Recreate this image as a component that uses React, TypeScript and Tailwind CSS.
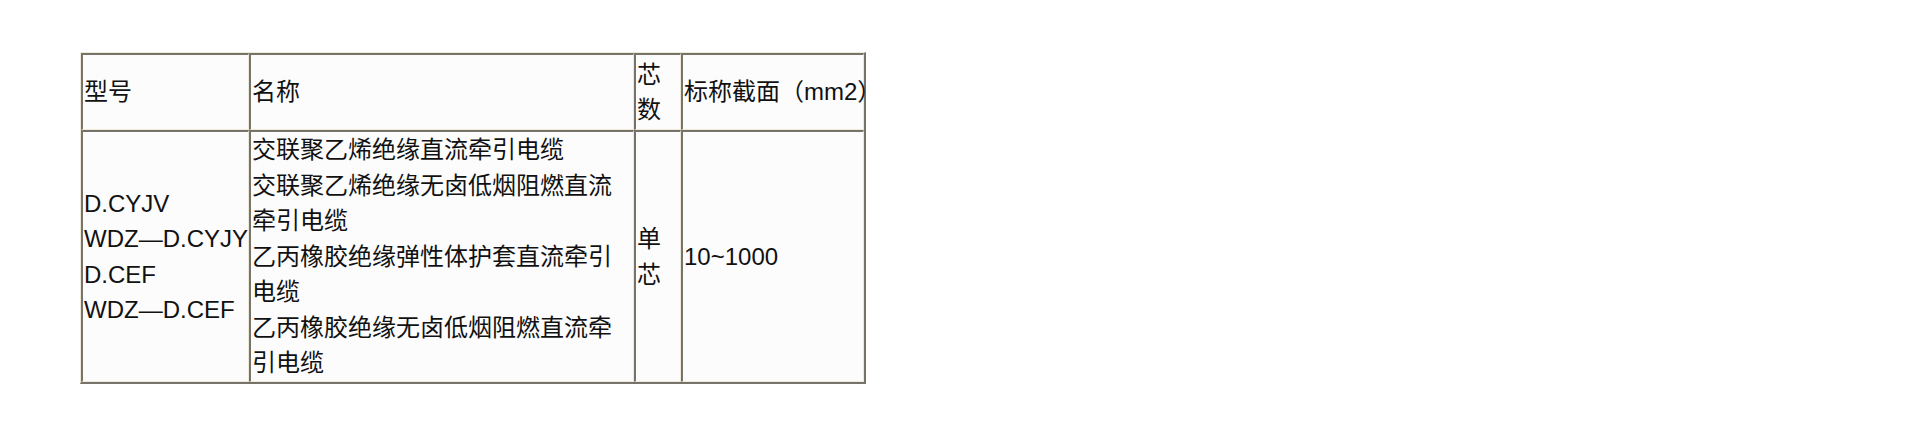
const cell =
  "flex flex-col justify-center pl-px bg-[#fcfcfc] border-t-2 border-l-2 border-r border-b border-t-[#77736a] border-l-[#77736a] border-r-[#ece9d8] border-b-[#ece9d8]";

const models = ["D.CYJV", "WDZ—D.CYJY", "D.CEF", "WDZ—D.CEF"];

const names = [
  "交联聚乙烯绝缘直流牵引电缆",
  "交联聚乙烯绝缘无卤低烟阻燃直流牵引电缆",
  "乙丙橡胶绝缘弹性体护套直流牵引电缆",
  "乙丙橡胶绝缘无卤低烟阻燃直流牵引电缆",
];

export default function App() {
  return (
    <div className="w-[1920px] h-[438px] bg-white pt-[52px] pl-[80px] font-['Liberation_Sans','Noto_Sans_CJK_SC',sans-serif] text-[24px] leading-[35.5px] text-[#111]">
      <div className="grid w-fit grid-cols-[168px_385px_47px_183px] grid-rows-[77px_252px] border-t border-l border-r-2 border-b-2 border-t-[#ece9d8] border-l-[#ece9d8] border-r-[#77736a] border-b-[#77736a]">
        {/* header row */}
        <div className={cell}>型号</div>
        <div className={cell}>名称</div>
        <div className={cell}>芯数</div>
        <div className={`${cell} whitespace-nowrap`}>标称截面（mm2）</div>

        {/* data row */}
        <div className={cell}>
          {models.map((m) => (
            <div key={m} className="whitespace-nowrap">
              {m}
            </div>
          ))}
        </div>
        <div className={cell}>
          {names.map((n) => (
            <div key={n}>{n}</div>
          ))}
        </div>
        <div className={cell}>单芯</div>
        <div className={cell}>10~1000</div>
      </div>
    </div>
  );
}
